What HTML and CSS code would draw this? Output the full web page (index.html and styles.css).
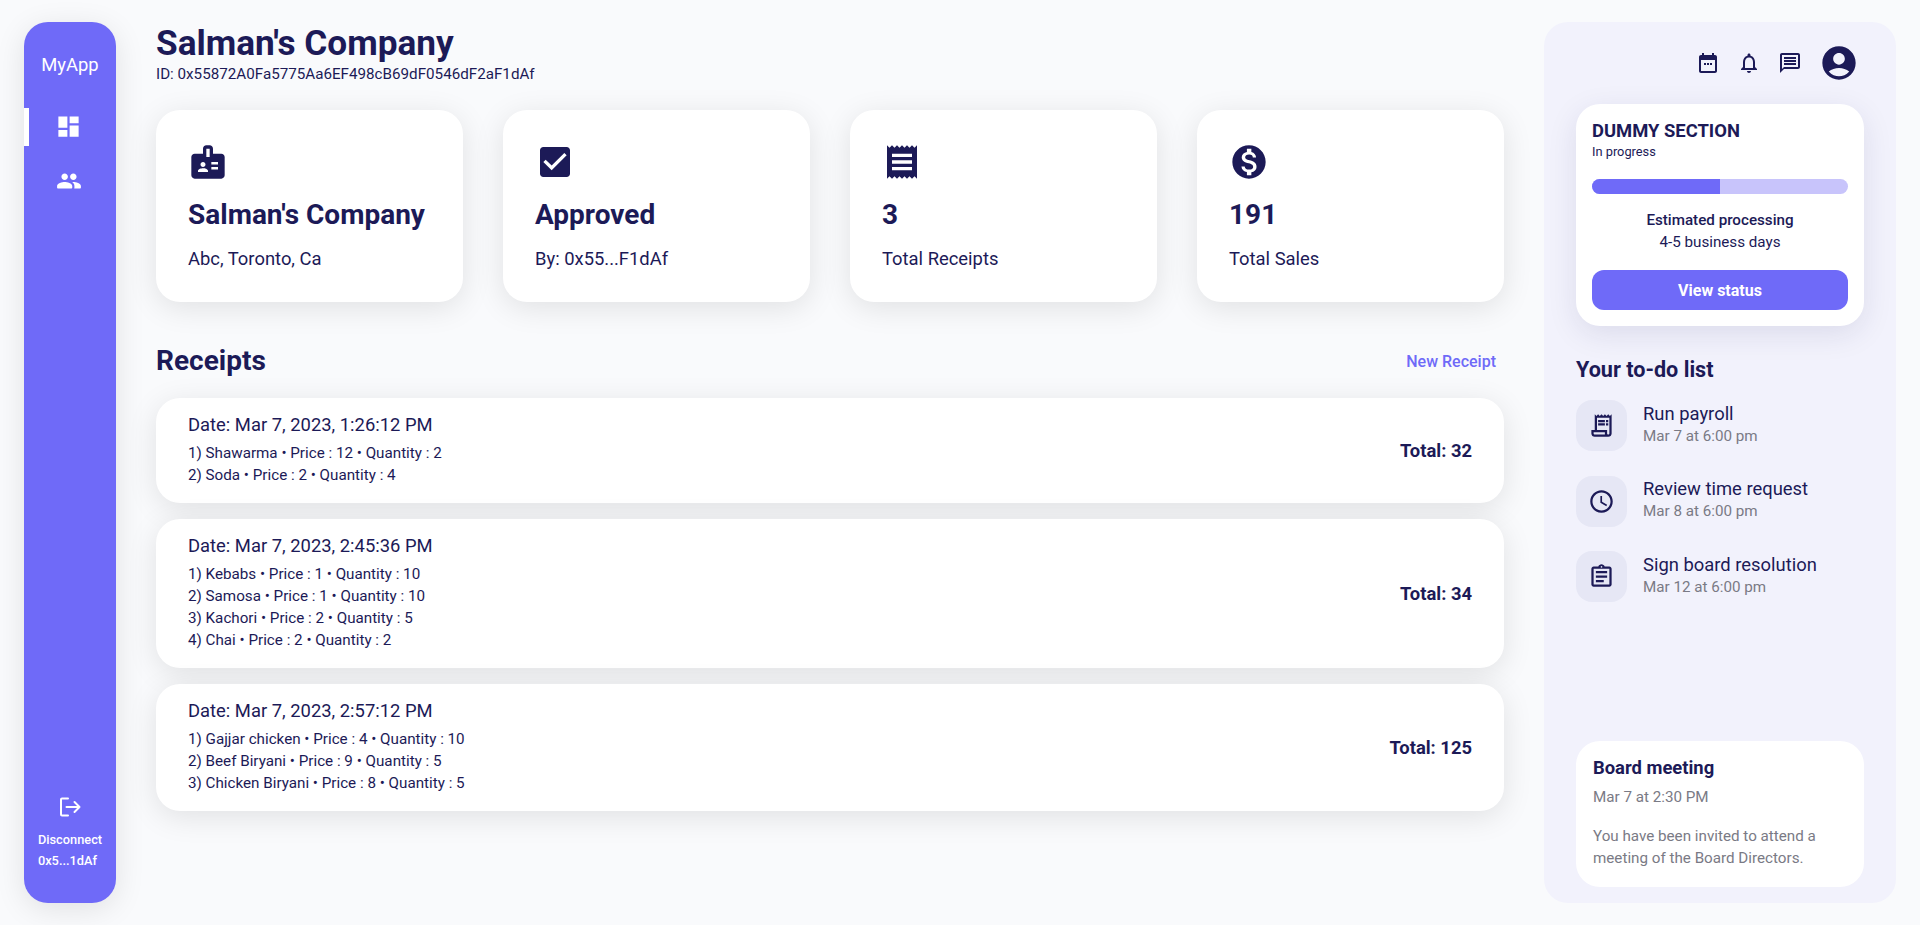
FILE: index.html
```html
<!DOCTYPE html>
<html lang="en">
<head>
    <meta charset="UTF-8">
    <meta name="viewport" content="width=device-width, initial-scale=1.0">
    <title>MyApp</title>
    <link rel="stylesheet" href="styles.css">
</head>
<body>
  <aside class="sidebar">
    <div class="logo">MyApp</div>
    <nav class="nav">
      <a class="nav-item active" href="#">
        <svg class="nav-icon-dash" viewBox="0 0 24 24"><path d="M3 13h8V3H3v10zm0 8h8v-6H3v6zm10 0h8V11h-8v10zm0-18v6h8V3h-8z"/></svg>
      </a>
      <a class="nav-item" href="#">
        <svg class="nav-icon-people" viewBox="0 0 24 24"><path d="M16 11c1.66 0 2.99-1.34 2.99-3S17.66 5 16 5s-3 1.34-3 3 1.34 3 3 3zm-8 0c1.66 0 2.99-1.34 2.99-3S9.66 5 8 5 5 6.34 5 8s1.34 3 3 3zm0 2c-2.33 0-7 1.17-7 3.5V18c0 .55.45 1 1 1h12c.55 0 1-.45 1-1v-1.500c0-2.330-4.670-3.500-7-3.500zm8 0c-.29 0-.62.020-.97.050.02.010.03.030.040.040 1.140.830 1.930 1.940 1.930 3.410V18c0 .350-.070.690-.180 1H22c.55 0 1-.45 1-1v-1.500c0-2.330-4.670-3.500-7-3.500z"/></svg>
      </a>
    </nav>
    <div class="disconnect">
      <svg class="logout-icon" viewBox="0 0 24 24"><path d="M11 3.5H5a1 1 0 0 0-1 1v15a1 1 0 0 0 1 1h6M9.500 12h13M17.500 7l5 5-5 5"/></svg>
      <p>Disconnect</p>
      <p>0x5...1dAf</p>
    </div>
  </aside>

  <main class="main">
    <h1>Salman's Company</h1>
    <div class="company-id">ID: 0x55872A0Fa5775Aa6EF498cB69dF0546dF2aF1dAf</div>

    <section class="stats">
      <div class="card">
        <svg class="card-icon" viewBox="0 0 24 24"><path d="M20 7h-5V4c0-1.1-.9-2-2-2h-2c-1.1 0-2 .9-2 2v3H4c-1.1 0-2 .9-2 2v11c0 1.1.9 2 2 2h16c1.100 0 2-.9 2-2V9c0-1.100-.9-2-2-2zM9 12c.83 0 1.500.67 1.500 1.500S9.830 15 9 15s-1.500-.67-1.500-1.500S8.170 12 9 12zm3 6H6v-.75c0-1 2-1.500 3-1.500s3 .5 3 1.500V18zm1-9h-2V4h2v5zm5 7.500h-4V15h4v1.500zm0-3h-4V12h4v1.500z"/></svg>
        <h2>Salman's Company</h2>
        <p>Abc, Toronto, Ca</p>
      </div>
      <div class="card">
        <svg class="card-icon" viewBox="0 0 24 24"><path d="M19 3H5c-1.110 0-2 .9-2 2v14c0 1.100.89 2 2 2h14c1.110 0 2-.9 2-2V5c0-1.100-.89-2-2-2zm-9 14l-5-5 1.410-1.410L10 14.170l7.590-7.590L19 8l-9 9z"/></svg>
        <h2>Approved</h2>
        <p>By: 0x55...F1dAf</p>
      </div>
      <div class="card">
        <svg class="card-icon" viewBox="0 0 24 24"><path d="M18 17H6v-2h12v2zm0-4H6v-2h12v2zm0-4H6V7h12v2zM3 22l1.500-1.500L6 22l1.500-1.500L9 22l1.500-1.500L12 22l1.500-1.500L15 22l1.500-1.500L18 22l1.500-1.500L21 22V2l-1.500 1.500L18 2l-1.500 1.500L15 2l-1.500 1.500L12 2l-1.500 1.500L9 2 7.500 3.500 6 2 4.500 3.500 3 2v20z"/></svg>
        <h2>3</h2>
        <p>Total Receipts</p>
      </div>
      <div class="card">
        <svg class="card-icon" viewBox="0 0 24 24"><path d="M12 2C6.480 2 2 6.480 2 12s4.480 10 10 10 10-4.480 10-10S17.520 2 12 2zm1.410 16.090V20h-2.670v-1.930c-1.710-.36-3.160-1.460-3.270-3.400h1.960c.1 1.050.82 1.870 2.650 1.870 1.960 0 2.400-.98 2.400-1.590 0-.83-.44-1.610-2.670-2.140-2.480-.6-4.180-1.620-4.180-3.670 0-1.720 1.390-2.840 3.110-3.210V4h2.670v1.950c1.860.45 2.790 1.860 2.850 3.390H14.300c-.05-1.110-.64-1.870-2.220-1.870-1.500 0-2.400.68-2.400 1.640 0 .84.65 1.390 2.670 1.910s4.180 1.390 4.180 3.910c-.01 1.830-1.380 2.830-3.120 3.160z"/></svg>
        <h2>191</h2>
        <p>Total Sales</p>
      </div>
    </section>

    <div class="section-head">
      <h2>Receipts</h2>
      <a href="#">New Receipt</a>
    </div>

    <section class="receipts">
      <div class="receipt">
        <div>
          <div class="receipt-date">Date: Mar 7, 2023, 1:26:12 PM</div>
          <div class="receipt-items">
            <p>1) Shawarma • Price : 12 • Quantity : 2</p>
            <p>2) Soda • Price : 2 • Quantity : 4</p>
          </div>
        </div>
        <div class="receipt-total">Total: 32</div>
      </div>
      <div class="receipt">
        <div>
          <div class="receipt-date">Date: Mar 7, 2023, 2:45:36 PM</div>
          <div class="receipt-items">
            <p>1) Kebabs • Price : 1 • Quantity : 10</p>
            <p>2) Samosa • Price : 1 • Quantity : 10</p>
            <p>3) Kachori • Price : 2 • Quantity : 5</p>
            <p>4) Chai • Price : 2 • Quantity : 2</p>
          </div>
        </div>
        <div class="receipt-total">Total: 34</div>
      </div>
      <div class="receipt">
        <div>
          <div class="receipt-date">Date: Mar 7, 2023, 2:57:12 PM</div>
          <div class="receipt-items">
            <p>1) Gajjar chicken • Price : 4 • Quantity : 10</p>
            <p>2) Beef Biryani • Price : 9 • Quantity : 5</p>
            <p>3) Chicken Biryani • Price : 8 • Quantity : 5</p>
          </div>
        </div>
        <div class="receipt-total">Total: 125</div>
      </div>
    </section>
  </main>

  <aside class="panel">
    <div class="topbar">
      <svg class="top-icon" viewBox="0 0 24 24"><path d="M19 4h-1V2h-2v2H8V2H6v2H5c-1.100 0-2 .9-2 2v14c0 1.100.9 2 2 2h14c1.100 0 2-.9 2-2V6c0-1.100-.9-2-2-2zm0 16H5V9h14v11zM8 12h2v2H8zm3 0h2v2h-2zm3 0h2v2h-2z"/></svg>
      <svg class="top-icon" viewBox="0 0 24 24"><path d="M12 22c1.100 0 2-.9 2-2h-4c0 1.100.9 2 2 2zm6-6v-5c0-3.070-1.630-5.640-4.500-6.320V4c0-.83-.67-1.500-1.500-1.500s-1.500.67-1.500 1.500v.68C7.640 5.360 6 7.920 6 11v5l-2 2v1h16v-1l-2-2zm-2 1H8v-6c0-2.480 1.510-4.500 4-4.500s4 2.020 4 4.500v6z"/></svg>
      <svg class="top-icon" viewBox="0 0 24 24"><path d="M20 2H4c-1.100 0-2 .9-2 2v18l4-4h14c1.100 0 2-.9 2-2V4c0-1.100-.9-2-2-2zm0 14H6l-2 2V4h16v12zM6 12h12v2H6zm0-3h12v2H6zm0-3h12v2H6z"/></svg>
      <svg class="avatar" viewBox="0 0 24 24"><path d="M12 2C6.480 2 2 6.480 2 12s4.480 10 10 10 10-4.480 10-10S17.520 2 12 2zm0 4c1.930 0 3.500 1.570 3.500 3.500S13.930 13 12 13s-3.500-1.570-3.500-3.500S10.070 6 12 6zm0 14c-2.030 0-4.430-.82-6.140-2.880C7.550 15.800 9.680 15 12 15s4.450.8 6.140 2.120C16.430 19.180 14.030 20 12 20z"/></svg>
    </div>

    <div class="status-card">
      <h3>DUMMY SECTION</h3>
      <div class="status-sub">In progress</div>
      <div class="progress"><div class="progress-fill" style="width: 50%"></div></div>
      <div class="status-label">Estimated processing</div>
      <div class="status-days">4-5 business days</div>
      <button type="button" class="status-btn">View status</button>
    </div>

    <h3 class="todo-title">Your to-do list</h3>
    <div class="todo">
      <div class="todo-item">
        <div class="todo-icon">
          <svg viewBox="0 0 24 24"><path d="M19.500 3.500L18 2l-1.500 1.500L15 2l-1.500 1.500L12 2l-1.500 1.500L9 2 7.500 3.500 6 2v14H3v3c0 1.660 1.340 3 3 3h12c1.660 0 3-1.340 3-3V2l-1.500 1.500zM15 20H6c-.55 0-1-.45-1-1v-1h10v2zm4-1c0 .55-.45 1-1 1s-1-.45-1-1v-3H8V5h11v14zM9 7h6v2H9zm7 0h2v2h-2zM9 10h6v2H9zm7 0h2v2h-2z"/></svg>
        </div>
        <div class="todo-text">
          <div class="todo-name">Run payroll</div>
          <div class="todo-date">Mar 7 at 6:00 pm</div>
        </div>
      </div>
      <div class="todo-item">
        <div class="todo-icon">
          <svg viewBox="0 0 24 24"><path d="M11.990 2C6.470 2 2 6.480 2 12s4.470 10 9.990 10C17.520 22 22 17.520 22 12S17.520 2 11.990 2zM12 20c-4.420 0-8-3.580-8-8s3.580-8 8-8 8 3.580 8 8-3.580 8-8 8zm.5-13H11v6l5.250 3.150.75-1.230-4.500-2.670z"/></svg>
        </div>
        <div class="todo-text">
          <div class="todo-name">Review time request</div>
          <div class="todo-date">Mar 8 at 6:00 pm</div>
        </div>
      </div>
      <div class="todo-item">
        <div class="todo-icon">
          <svg viewBox="0 0 24 24"><path d="M7 15h7v2H7zm0-4h10v2H7zm0-4h10v2H7zm12-4h-4.180C14.400 1.840 13.300 1 12 1c-1.300 0-2.400.84-2.820 2H5c-1.100 0-2 .9-2 2v14c0 1.100.9 2 2 2h14c1.100 0 2-.9 2-2V5c0-1.100-.9-2-2-2zm-7-.25c.41 0 .75.34.75.75s-.34.75-.75.75-.75-.34-.75-.75.34-.75.75-.75zM19 19H5V5h14v14z"/></svg>
        </div>
        <div class="todo-text">
          <div class="todo-name">Sign board resolution</div>
          <div class="todo-date">Mar 12 at 6:00 pm</div>
        </div>
      </div>
    </div>

    <div class="meeting">
      <h4>Board meeting</h4>
      <div class="meeting-date">Mar 7 at 2:30 PM</div>
      <p>You have been invited to attend a meeting of the Board Directors.</p>
    </div>
  </aside>
</body>
</html>
```

FILE: styles.css
```css
* {
    box-sizing: border-box;
}
body {
    font-family: Roboto, "Liberation Sans", sans-serif;
    margin: 0;
    padding: 22px 24px;
    height: 925px;
    overflow: hidden;
    background-color: #f9fafc;
    color: #1c1a57;
    display: flex;
    gap: 40px;
}
h1, h2, h3, h4, p {
    margin: 0;
}

/* left bar */
.sidebar {
    width: 92px;
    flex-shrink: 0;
    background-color: #6f6af8;
    border-radius: 24px;
    box-shadow: 0 6px 30px rgba(0, 0, 0, 0.1);
    color: white;
    display: flex;
    flex-direction: column;
    align-items: center;
}
.logo {
    font-size: 18.4px;
    line-height: 22px;
    margin-top: 32px;
}
.nav {
    width: 100%;
    margin-top: 32px;
    display: flex;
    flex-direction: column;
}
.nav-item {
    height: 38px;
    display: flex;
    align-items: center;
    justify-content: center;
    margin-bottom: 16px;
    padding-right: 2px;
}
.nav-item.active {
    border-left: 5px solid white;
    padding-right: 9px;
}
.nav-item svg {
    fill: white;
    display: block;
}
.nav-icon-dash {
    width: 27px;
    height: 27px;
    margin-bottom: 2px;
}
.nav-icon-people {
    width: 26px;
    height: 26px;
}
.disconnect {
    margin-top: auto;
    margin-bottom: 32px;
    font-size: 12.8px;
    font-weight: 500;
    line-height: 21px;
}
.logout-icon {
    display: block;
    width: 24px;
    height: 24px;
    margin: 0 auto 10px;
    transform: translateX(-1px);
    fill: none;
    stroke: white;
    stroke-width: 2;
    stroke-linecap: round;
    stroke-linejoin: round;
}

/* main column */
.main {
    width: 1348px;
    flex-shrink: 0;
}
.main h1 {
    font-size: 35.2px;
    font-weight: 700;
    line-height: 42px;
}
.company-id {
    font-size: 15.2px;
    line-height: 16px;
    margin-top: 2px;
}
.stats {
    display: grid;
    grid-template-columns: repeat(4, 1fr);
    gap: 40px;
    margin-top: 28px;
}
.card {
    height: 192px;
    background-color: white;
    border-radius: 24px;
    box-shadow: 0 6px 30px rgba(0, 0, 0, 0.1);
    padding: 32px;
}
.card-icon {
    display: block;
    width: 40px;
    height: 40px;
    fill: #1c1a57;
}
.card h2 {
    font-size: 28px;
    font-weight: 700;
    line-height: 34px;
    margin-top: 16px;
}
.card p {
    font-size: 18.4px;
    line-height: 20px;
    margin-top: 17px;
}
.section-head {
    display: flex;
    justify-content: space-between;
    align-items: center;
    margin-top: 42px;
    padding-right: 8px;
}
.section-head h2 {
    font-size: 28px;
    font-weight: 700;
    line-height: 34px;
}
.section-head a {
    font-size: 16px;
    font-weight: 500;
    color: #6f6af8;
    text-decoration: none;
}
.receipts {
    display: flex;
    flex-direction: column;
    gap: 16px;
    margin-top: 20px;
}
.receipt {
    background-color: white;
    border-radius: 24px;
    box-shadow: 0 6px 30px rgba(0, 0, 0, 0.1);
    padding: 16px 32px 17px;
    display: flex;
    justify-content: space-between;
    align-items: center;
}
.receipt-date {
    font-size: 18.4px;
    line-height: 22px;
}
.receipt-items {
    margin-top: 7px;
    font-size: 15.2px;
    line-height: 21.7px;
}
.receipt-total {
    font-size: 18.4px;
    font-weight: 700;
}

/* right panel */
.panel {
    width: 352px;
    flex-shrink: 0;
    background-color: #f2f2fc;
    border-radius: 24px;
    padding: 0 32px 16px;
    display: flex;
    flex-direction: column;
}
.topbar {
    height: 82px;
    padding-right: 5px;
    display: flex;
    justify-content: flex-end;
    align-items: center;
    gap: 17px;
}
.top-icon {
    width: 24px;
    height: 24px;
    fill: #1c1a57;
}
.avatar {
    width: 40px;
    height: 40px;
    fill: #1c1a57;
}
.status-card {
    height: 222px;
    background-color: white;
    border-radius: 24px;
    box-shadow: 0 8px 30px rgba(28, 26, 87, 0.1);
    padding: 16px;
    text-align: center;
}
.status-card h3 {
    font-size: 18.4px;
    font-weight: 700;
    line-height: 22px;
    text-align: left;
}
.status-sub {
    font-size: 12.8px;
    line-height: 16px;
    margin-top: 2px;
    text-align: left;
}
.progress {
    height: 15px;
    margin-top: 19px;
    background-color: #c8c4fb;
    border-radius: 8px;
    overflow: hidden;
}
.progress-fill {
    height: 100%;
    background-color: #6f6af8;
}
.status-label {
    font-size: 15.2px;
    font-weight: 500;
    line-height: 20px;
    margin-top: 16px;
}
.status-days {
    font-size: 15.2px;
    line-height: 20px;
    margin-top: 2px;
}
.status-btn {
    display: block;
    width: 100%;
    height: 40px;
    margin-top: 18px;
    border: none;
    border-radius: 12px;
    background-color: #6f6af8;
    color: white;
    font-family: inherit;
    font-size: 16px;
    font-weight: 700;
    cursor: pointer;
}
.todo-title {
    font-size: 21.6px;
    font-weight: 700;
    line-height: 24px;
    margin-top: 32px;
}
.todo {
    display: flex;
    flex-direction: column;
    gap: 24.5px;
    margin-top: 18px;
}
.todo-item {
    display: flex;
    align-items: center;
    gap: 16px;
}
.todo-icon {
    width: 51px;
    height: 51px;
    border-radius: 16px;
    background-color: #e6e7f5;
    display: flex;
    align-items: center;
    justify-content: center;
}
.todo-icon svg {
    width: 27px;
    height: 27px;
    fill: #1c1a57;
}
.todo-text {
    margin-bottom: 3px;
}
.todo-name {
    font-size: 18.4px;
    line-height: 22px;
}
.todo-date {
    font-size: 15.2px;
    line-height: 20px;
    color: #7a7a85;
    margin-top: 1px;
}
.meeting {
    height: 146px;
    margin-top: auto;
    background-color: white;
    border-radius: 24px;
    padding: 16px 17px;
}
.meeting h4 {
    font-size: 18.4px;
    font-weight: 700;
    line-height: 22px;
}
.meeting-date {
    font-size: 15.2px;
    line-height: 20px;
    color: #7a7a85;
    margin-top: 8px;
}
.meeting p {
    font-size: 15.2px;
    line-height: 22px;
    color: #7a7a85;
    margin-top: 18px;
}
```
